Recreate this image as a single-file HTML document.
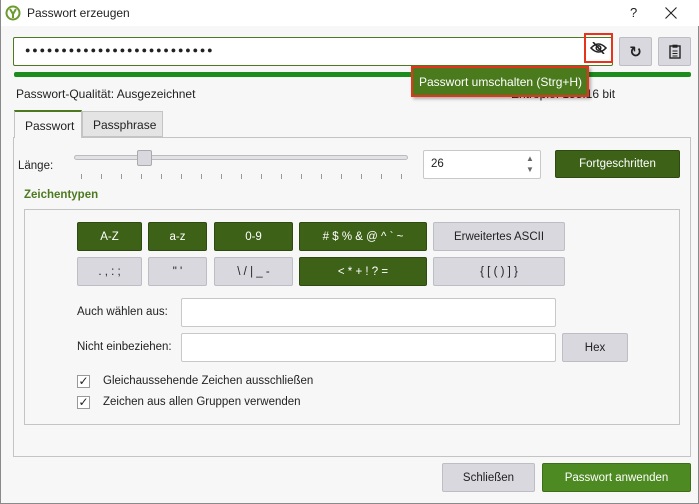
<!DOCTYPE html>
<html><head><meta charset="utf-8"><style>
*{box-sizing:border-box;margin:0;padding:0}
body{width:699px;height:504px;background:#f7f7f7;font-family:"Liberation Sans","DejaVu Sans",sans-serif;font-size:12px;color:#222;position:relative;overflow:hidden;border:1px solid #8a8a8a;border-top:none}
.a{position:absolute}
.title{left:0;top:0;width:699px;height:26px;background:#fff}
.btn{position:absolute;background:#d8d8de;border:1px solid #bdbdc4;border-radius:2px;display:flex;align-items:center;justify-content:center;font-size:11.5px;color:#222}
.g{background:#3d6117;border-color:#2e4a10;color:#fff}
.inp{position:absolute;background:#fff;border:1px solid #c8c8c8;border-radius:2px}
.cb{position:absolute;width:13px;height:13px;border:1px solid #999;background:#fff;font-size:12px;line-height:11px;text-align:center;font-weight:bold}
.tick{position:absolute;top:174px;width:1px;height:5px;background:#999}
</style></head><body>
<div class="a title">
 <svg class="a" style="left:4px;top:5px" width="16" height="16" viewBox="0 0 16 16"><circle cx="8" cy="8" r="7.5" fill="#6b9a2e"/><circle cx="8" cy="8" r="5.5" fill="#fff"/><path d="M5 4 L8 9 L11 4 M8 9 V13" stroke="#6b9a2e" stroke-width="2" fill="none"/></svg>
 <div class="a" style="left:26px;top:6px;font-size:12px">Passwort erzeugen</div>
 <div class="a" style="left:629px;top:5px;font-size:13px">?</div>
 <svg class="a" style="left:664px;top:7px" width="12" height="12" viewBox="0 0 12 12"><path d="M0.5 0.5L11.5 11.5M11.5 0.5L0.5 11.5" stroke="#222" stroke-width="1.1"/></svg>
</div>
<div class="inp" style="left:12px;top:37px;width:600px;height:29px;border-color:#4d7a20"></div>
<div class="a" style="left:24px;top:45px;font-size:9px;letter-spacing:1.85px">●●●●●●●●●●●●●●●●●●●●●●●●●●</div>
<div class="a" style="left:583px;top:33px;width:29px;height:30px;border:2px solid #e8321c"></div>
<svg class="a" style="left:589px;top:42px" width="17" height="12" viewBox="0 0 17 12"><path d="M1 6 Q8.5 -2 16 6 Q8.5 14 1 6Z" fill="none" stroke="#222" stroke-width="1.6"/><circle cx="8.5" cy="6" r="2.3" fill="none" stroke="#222" stroke-width="1.5"/><path d="M3 0 L14 12" stroke="#222" stroke-width="1.6"/></svg>
<div class="btn" style="left:618px;top:37px;width:33px;height:29px;font-size:15px;font-weight:bold">↻</div>
<div class="btn" style="left:657px;top:37px;width:33px;height:29px">
<svg width="12" height="15" viewBox="0 0 12 15"><rect x="1" y="2" width="10" height="12" fill="none" stroke="#222" stroke-width="1.4"/><rect x="3.5" y="0.7" width="5" height="3" fill="#222"/><path d="M3.5 7h5M3.5 9.5h5M3.5 12h5" stroke="#222"/></svg></div>
<div class="a" style="left:13px;top:72px;width:677px;height:5px;background:#1c8c1c;border-radius:2px"></div>
<div class="a" style="left:15px;top:87px">Passwort-Qualität: Ausgezeichnet</div>
<div class="a" style="left:510px;top:87px">Entropie: 155.16 bit</div>
<div class="a" style="left:410px;top:66px;width:178px;height:31px;border:2px solid #e8321c;background:#4a7a1c;color:#fff;padding:7px 0 0 6px;font-size:12px;box-shadow:2px 2px 3px rgba(0,0,0,.3)">Passwort umschalten (Strg+H)</div>
<div class="a" style="left:12px;top:137px;width:678px;height:320px;border:1px solid #c4c4c4;background:#f7f7f7"></div>
<div class="a" style="left:13px;top:110px;width:68px;height:28px;background:#f7f7f7;border:1px solid #c4c4c4;border-bottom:none;border-top:2px solid #4d7a20;padding:7px 0 0 10px">Passwort</div>
<div class="a" style="left:81px;top:111px;width:81px;height:26px;background:#e4e4e4;border:1px solid #c4c4c4;padding:6px 0 0 10px">Passphrase</div>
<div class="a" style="left:17px;top:160px;font-size:11.5px">Länge:</div>
<div class="a" style="left:73px;top:155px;width:334px;height:5px;background:#e2e2e6;border:1px solid #bbb;border-radius:3px"></div>
<div class="a" style="left:136px;top:150px;width:15px;height:16px;background:#d8d8de;border:1px solid #aaa;border-radius:2px"></div>
<div class="tick" style="left:80px"></div><div class="tick" style="left:100px"></div><div class="tick" style="left:120px"></div><div class="tick" style="left:140px"></div><div class="tick" style="left:160px"></div><div class="tick" style="left:180px"></div><div class="tick" style="left:200px"></div><div class="tick" style="left:220px"></div><div class="tick" style="left:240px"></div><div class="tick" style="left:260px"></div><div class="tick" style="left:280px"></div><div class="tick" style="left:300px"></div><div class="tick" style="left:320px"></div><div class="tick" style="left:340px"></div><div class="tick" style="left:360px"></div><div class="tick" style="left:380px"></div><div class="tick" style="left:400px"></div>
<div class="inp" style="left:422px;top:150px;width:118px;height:29px;padding:7px 0 0 7px;font-size:11.5px">26</div>
<div class="a" style="left:525px;top:153px;font-size:8px;color:#666;line-height:11px">▲<br>▼</div>
<div class="btn g" style="left:554px;top:150px;width:125px;height:28px">Fortgeschritten</div>
<div class="a" style="left:23px;top:189px;color:#4d7a20;font-weight:bold;font-size:11.5px">Zeichentypen</div>
<div class="a" style="left:23px;top:209px;width:656px;height:216px;border:1px solid #c4c4c4"></div>
<div class="btn g" style="left:76px;top:222px;width:65px;height:29px">A-Z</div>
<div class="btn g" style="left:147px;top:222px;width:59px;height:29px">a-z</div>
<div class="btn g" style="left:213px;top:222px;width:79px;height:29px">0-9</div>
<div class="btn g" style="left:298px;top:222px;width:128px;height:29px"># $ % &amp; @ ^ ` ~</div>
<div class="btn" style="left:432px;top:222px;width:132px;height:29px">Erweitertes ASCII</div>
<div class="btn" style="left:76px;top:257px;width:65px;height:29px">. , : ;</div>
<div class="btn" style="left:147px;top:257px;width:59px;height:29px">" '</div>
<div class="btn" style="left:213px;top:257px;width:79px;height:29px">\ / | _ -</div>
<div class="btn g" style="left:298px;top:257px;width:128px;height:29px">&lt; * + ! ? =</div>
<div class="btn" style="left:432px;top:257px;width:132px;height:29px">{ [ ( ) ] }</div>
<div class="a" style="left:76px;top:306px;font-size:11.5px">Auch wählen aus:</div>
<div class="inp" style="left:180px;top:298px;width:375px;height:29px"></div>
<div class="a" style="left:76px;top:341px;font-size:11.5px">Nicht einbeziehen:</div>
<div class="inp" style="left:180px;top:333px;width:375px;height:29px"></div>
<div class="btn" style="left:561px;top:333px;width:66px;height:29px">Hex</div>
<div class="cb" style="left:76px;top:375px">✓</div>
<div class="a" style="left:102px;top:375px;font-size:11.5px">Gleichaussehende Zeichen ausschließen</div>
<div class="cb" style="left:76px;top:396px">✓</div>
<div class="a" style="left:102px;top:396px;font-size:11.5px">Zeichen aus allen Gruppen verwenden</div>
<div class="btn" style="left:441px;top:463px;width:93px;height:29px">Schließen</div>
<div class="btn" style="left:541px;top:463px;width:149px;height:29px;background:#4d8a22;border-color:#3d6f18;color:#fff">Passwort anwenden</div>
</body></html>
